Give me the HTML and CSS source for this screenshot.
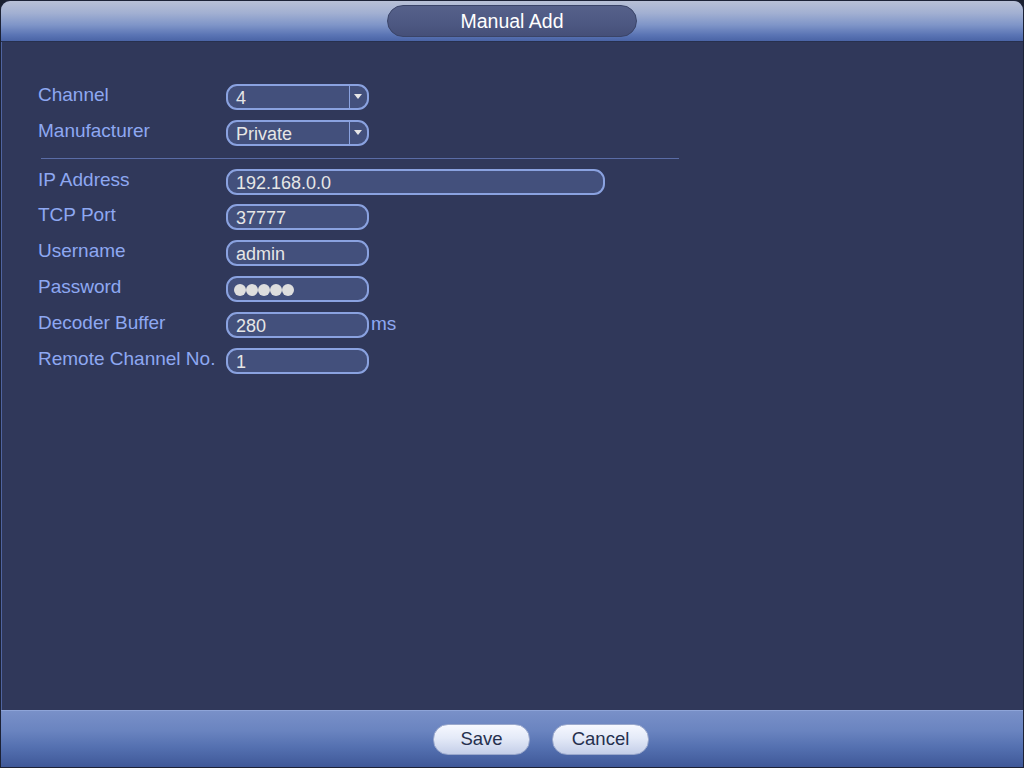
FILE: index.html
```html
<!DOCTYPE html>
<html lang="en">
<head>
    <meta charset="UTF-8">
    <title>Manual Add</title>
    <link rel="stylesheet" href="styles.css">
</head>
<body>
    <div class="window">
        <div class="window-header">
            <div class="window-title">Manual Add</div>
        </div>

        <div class="window-body">
            <div class="form-row">
                <label>Channel</label>
                <div class="field select">
                    <span class="value">4</span>
                    <span class="arrow"></span>
                </div>
            </div>
            <div class="form-row">
                <label>Manufacturer</label>
                <div class="field select">
                    <span class="value">Private</span>
                    <span class="arrow"></span>
                </div>
            </div>

            <div class="separator"></div>

            <div class="form-row first">
                <label>IP Address</label>
                <div class="field wide"><span class="value">192.168.0.0</span></div>
            </div>
            <div class="form-row">
                <label>TCP Port</label>
                <div class="field"><span class="value">37777</span></div>
            </div>
            <div class="form-row">
                <label>Username</label>
                <div class="field"><span class="value">admin</span></div>
            </div>
            <div class="form-row">
                <label>Password</label>
                <div class="field">
                    <span class="dots"><i></i><i></i><i></i><i></i><i></i></span>
                </div>
            </div>
            <div class="form-row">
                <label>Decoder Buffer</label>
                <div class="field"><span class="value">280</span></div>
                <span class="unit">ms</span>
            </div>
            <div class="form-row">
                <label>Remote Channel No.</label>
                <div class="field"><span class="value">1</span></div>
            </div>
        </div>

        <div class="window-footer">
            <button class="btn">Save</button>
            <button class="btn">Cancel</button>
        </div>
    </div>
</body>
</html>
```

FILE: styles.css
```css
html, body {
    margin: 0;
    padding: 0;
    background-color: #1a2030;
}

body {
    font-family: 'Liberation Sans', Arial, sans-serif;
    font-size: 18px;
}

.window {
    width: 1024px;
    height: 768px;
    box-sizing: border-box;
    display: flex;
    flex-direction: column;
    border: 1px solid #1c2236;
    border-radius: 10px 10px 0 0;
    overflow: hidden;
    background-color: #30385a;
}

.window-header {
    height: 41px;
    display: flex;
    justify-content: center;
    align-items: flex-start;
    padding-top: 4px;
    box-sizing: border-box;
    background: linear-gradient(to bottom, #b8c0d6 0%, #a2b0d2 30%, #7f95c8 60%, #5a74b4 85%, #4a64a6 100%);
    border-bottom: 1px solid #27304e;
}

.window-title {
    width: 250px;
    height: 32px;
    line-height: 31px;
    text-align: center;
    color: #fff;
    font-size: 19.5px;
    border-radius: 16px;
    background: linear-gradient(to bottom, #56618a 0%, #4d5882 60%, #454f78 100%);
    border: 1px solid #3a4468;
    box-sizing: border-box;
}

.window-body {
    flex: 1;
    padding: 42px 0 0 36px;
    border-left: 1px solid #4f64a0;
}

.form-row {
    display: flex;
    align-items: center;
    height: 26px;
    margin-bottom: 10px;
}

.form-row.first {
    margin-bottom: 9px;
}

.form-row label {
    width: 188px;
    color: #8ea8f2;
    font-size: 19px;
    margin-top: -4px;
}

.field {
    width: 143px;
    height: 26px;
    box-sizing: border-box;
    border: 2px solid #8aa2e0;
    border-radius: 11px;
    background-color: #43507c;
    color: #e6e6e6;
    display: flex;
    align-items: center;
    padding-left: 8px;
}

.field.wide {
    width: 379px;
}

.field .value {
    flex: 1;
    margin-top: 2px;
}

.select {
    padding-right: 0;
}

.select .arrow {
    width: 17px;
    height: 100%;
    border-left: 1px solid #8aa2e0;
    position: relative;
}

.select .arrow::after {
    content: '';
    position: absolute;
    left: 4px;
    top: 8px;
    border-left: 4px solid transparent;
    border-right: 4px solid transparent;
    border-top: 5px solid #e6e6e6;
}

.dots {
    display: flex;
    gap: 0;
    margin-top: 1px;
    margin-left: -2px;
}

.dots i {
    width: 12px;
    height: 12px;
    border-radius: 50%;
    background-color: #dedede;
}

.unit {
    color: #8ea8f2;
    font-size: 19px;
    margin-left: 2px;
    margin-top: -2px;
}

.separator {
    width: 638px;
    height: 1px;
    margin: 12px 0 10px 3px;
    background-color: #5a6ca6;
}

.window-footer {
    height: 57px;
    box-sizing: border-box;
    display: flex;
    justify-content: center;
    align-items: center;
    gap: 22px;
    padding: 0 0 0 58px;
    border-top: 1px solid #8ea4d8;
    background: linear-gradient(to bottom, #7990c8 0%, #6a84c0 35%, #5470b0 65%, #3f5898 100%);
}

.btn {
    width: 97px;
    height: 31px;
    border-radius: 15px;
    border: 1px solid #9aa8cc;
    background: linear-gradient(to bottom, #f6f8ff 0%, #e4eaf8 45%, #c4cee8 100%);
    color: #26304e;
    font-family: 'Liberation Sans', Arial, sans-serif;
    font-size: 18.5px;
    padding: 0;
}
```
